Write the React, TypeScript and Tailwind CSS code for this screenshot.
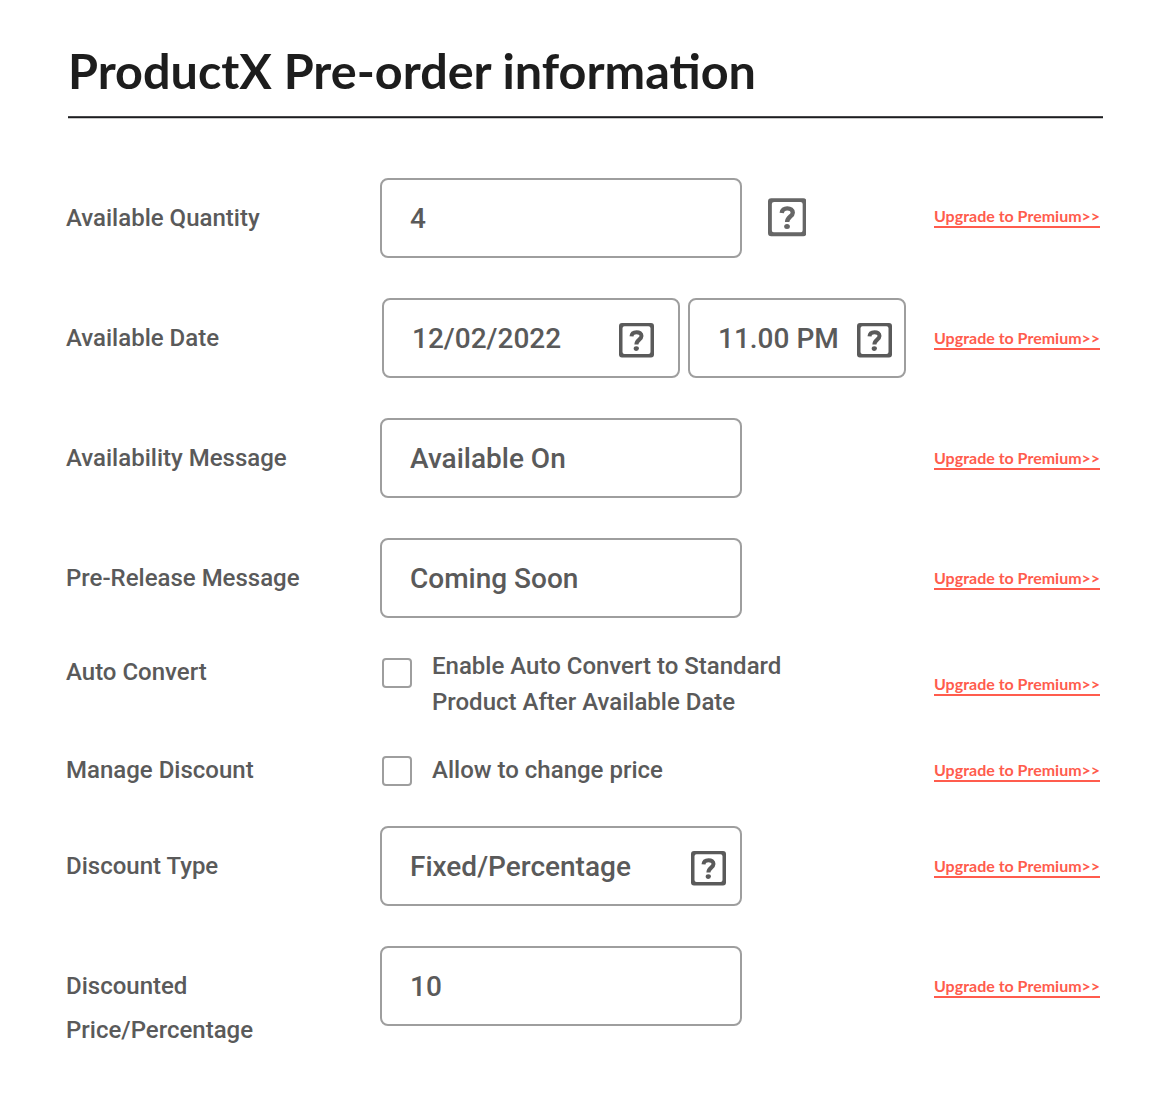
import type { ReactNode } from "react";

function HelpIcon({ large = false }: { large?: boolean }) {
  return (
    <svg
      viewBox="0 0 35 35"
      className={large ? "h-[39px] w-[38.5px] shrink-0 text-[#666666]" : "h-[35px] w-[35px] shrink-0 text-[#5a5a5a]"}
      fill="none"
      stroke="currentColor"
    >
      <path
        d="M3 0H32a3 3 0 0 1 3 3V31.500a3 3 0 0 1-3 3H3a3 3 0 0 1-3-3V3a3 3 0 0 1 3-3ZM5.500 3.300a2 2 0 0 0-2 2V29a2 2 0 0 0 2 2H29.500a2 2 0 0 0 2-2V5.300a2 2 0 0 0-2-2Z"
        fill="currentColor"
        fillRule="evenodd"
        stroke="none"
      />
      <path d="M12.500 13.400C12.700 10.700 14.800 9.200 17.500 9.200C20.400 9.200 22.500 10.600 22.500 13.100C22.500 16.600 17.400 16.800 17.400 21.500" strokeWidth="4" />
      <ellipse cx="17.300" cy="25.600" rx="2.600" ry="2.300" fill="currentColor" stroke="none" />
    </svg>
  );
}

function Field({ value, className = "ml-0 w-[362px] pl-7", help = false }: { value: string; className?: string; help?: boolean }) {
  return (
    <div className={`flex h-20 shrink-0 items-center justify-between rounded-lg border-2 border-[#9e9e9e] text-[28px] leading-8 ${className}`}>
      <span className="pt-[2px] whitespace-nowrap">{value}</span>
      {help && (
        <span className="pt-[5px]">
          <HelpIcon />
        </span>
      )}
    </div>
  );
}

function Check({ className, children }: { className: string; children: ReactNode }) {
  return (
    <div className="ml-0.5 flex gap-5">
      <span className={`h-[30px] w-[30px] shrink-0 rounded border-2 border-[#9e9e9e] ${className}`} />
      <p className="text-[24px] leading-9 whitespace-nowrap">{children}</p>
    </div>
  );
}

function Row({
  label,
  children,
  className = "mb-10 h-20",
  labelClass = "pt-[18px]",
  linkClass = "pt-[29px]",
}: {
  label: ReactNode;
  children: ReactNode;
  className?: string;
  labelClass?: string;
  linkClass?: string;
}) {
  return (
    <div className={`grid grid-cols-[314px_554px_166px] ${className}`}>
      <div className={`text-[24px] leading-[44px] whitespace-nowrap ${labelClass}`}>{label}</div>
      <div className="flex">{children}</div>
      <div className={linkClass}>
        <a className="block h-[23px] w-[166px] border-b-2 border-[#ff5c4d] font-[Lato] text-[16px] leading-[21px] font-bold whitespace-nowrap text-[#ff5c4d]">
          Upgrade to Premium&gt;&gt;
        </a>
      </div>
    </div>
  );
}

export default function App() {
  return (
    <main className="h-[1109px] w-[1174px] overflow-hidden bg-white pl-[66px] font-[Roboto] font-medium text-[#5a5a5a]">
      <h1 className="ml-0.5 h-[116px] pt-10 font-[Lato] text-[48.56px] leading-[60px] font-bold text-[#1d1d1d]">
        ProductX Pre-order information
      </h1>
      <div className="mb-[59px] ml-0.5 h-[3px] w-[1035px] border-t border-b border-t-[#48494b] border-b-[#c8c8c8] bg-[#1d1e20]" />

      <Row label="Available Quantity" linkClass="pt-[27px]">
        <Field value="4" />
        <span className="pt-5 pl-[25.5px]">
          <HelpIcon large />
        </span>
      </Row>
      <Row label="Available Date">
        <Field value="12/02/2022" className="ml-0.5 w-[298px] pr-6 pl-7" help />
        <Field value="11.00 PM" className="ml-2 w-[218px] pr-3 pl-7" help />
      </Row>
      <Row label="Availability Message">
        <Field value="Available On" />
      </Row>
      <Row label="Pre-Release Message" className="mb-[30px] h-20">
        <Field value="Coming Soon" />
      </Row>
      <Row label="Auto Convert" className="mb-8 h-[72px]" labelClass="pt-[2px]" linkClass="pt-[25px]">
        <Check className="mt-[10px]">
          Enable Auto Convert to Standard
          <br />
          Product After Available Date
        </Check>
      </Row>
      <Row label="Manage Discount" className="mb-[38px] h-9" labelClass="-mt-1" linkClass="pt-[7px]">
        <Check className="mt-[4px]">Allow to change price</Check>
      </Row>
      <Row label="Discount Type">
        <Field value="Fixed/Percentage" className="ml-0 w-[362px] pr-3.5 pl-7" help />
      </Row>
      <Row
        label={
          <>
            Discounted
            <br />
            Price/Percentage
          </>
        }
      >
        <Field value="10" />
      </Row>
    </main>
  );
}
